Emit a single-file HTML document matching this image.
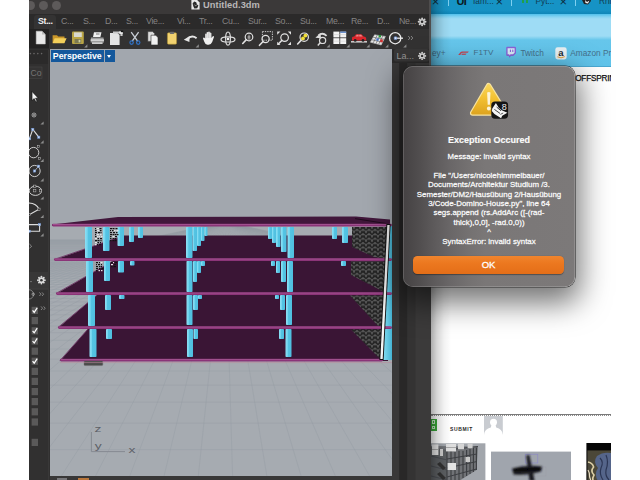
<!DOCTYPE html>
<html><head><meta charset="utf-8">
<style>
html,body{margin:0;padding:0;}
body{width:640px;height:480px;overflow:hidden;background:#fff;position:relative;font-family:"Liberation Sans",sans-serif;}
.a{position:absolute;}
#rh{left:29px;top:0;width:402px;height:480px;background:#2d2c2c;overflow:hidden;}
#title{left:0;top:0;width:402px;height:14px;background:#3b3939;}
.tl{position:absolute;top:1px;width:9px;height:9px;border-radius:50%;background:#5d5a5a;}
#tabs{left:0;top:14px;width:402px;height:15px;background:#2b2a2a;}
.tab{position:absolute;top:1.5px;font-size:8.8px;color:#858383;letter-spacing:-0.3px;line-height:11px;}
#tools{left:0;top:29px;width:402px;height:20px;background:#333232;}
#vp{left:21px;top:49px;width:342px;height:427px;background:#a2a7ae;overflow:hidden;}
#side{left:0;top:49px;width:21px;height:431px;background:#313030;}
#rp{left:363px;top:49px;width:39px;height:431px;background:#2c2b2b;}
#br{left:431px;top:0;width:180px;height:480px;background:#fff;overflow:hidden;}
#dlg{left:403px;top:66px;width:172px;height:220.6px;border-radius:10px;background:linear-gradient(90deg,#454243 0%,#504d4e 9%,#5d5a5b 18%,#6a6768 28%,#747171 38%,#7a7777 48%,#7c7979 100%);box-shadow:inset 0 0 0 0.7px rgba(255,255,255,.22),0 0 0 0.6px rgba(30,30,30,.85),0 11px 30px 5px rgba(0,0,0,.55);color:#fff;text-align:center;}
.dt{left:0;width:172px;text-align:center;font-size:7.9px;color:#fbfbfb;white-space:nowrap;-webkit-text-stroke:0.28px rgba(255,255,255,.85);}
#ok{left:9.7px;top:190.2px;width:151.8px;height:18.2px;-webkit-text-stroke:0.3px #fff;border-radius:4.5px;background:linear-gradient(180deg,#f0852e 0%,#ec781f 40%,#e46e18 100%);color:#fff;font-size:9.5px;line-height:18px;text-align:center;box-shadow:0 0.5px 1px rgba(0,0,0,.35);}
.tb{font-size:13px;color:#0c2c3c;line-height:13px;}
.sep{top:0;width:1px;height:6px;background:#7fd0f0;}
.tt{top:-3.2px;font-size:8.3px;color:#123c52;line-height:9px;white-space:nowrap;}
.bm{top:48px;font-size:8.3px;color:#45708a;line-height:10px;white-space:nowrap;}
</style></head><body>

<div id="br" class="a">
 <div class="a" style="left:0;top:0;width:180px;height:14px;background:#1693c5;"></div>
 <div class="a" style="left:0;top:10px;width:180px;height:3.5px;background:linear-gradient(180deg,#1693c5,#0f86b8);"></div>
 <div class="a" style="left:0;top:13.5px;width:180px;height:26px;background:#9edcf5;"></div>
 <div class="a" style="left:0;top:13.5px;width:180px;height:5px;background:linear-gradient(180deg,#4fc0ec,#86d4f2 60%,#9edcf5);"></div>
 <div class="a" style="left:0;top:36px;width:180px;height:31px;background:linear-gradient(180deg,#9edcf5 0,#66c6eb 4px,#5fc3ea 100%);"></div>
 <div class="a" style="left:0;top:66px;width:180px;height:1px;background:#4aa8d2;"></div>
 <!-- tab strip, clipped text -->
 <div class="a tb" style="left:0.8px;top:-5.5px;">×</div>
 <div class="a sep" style="left:17px;"></div>
 <div class="a" style="left:25.5px;top:-4.5px;font-size:11px;font-weight:bold;color:#0a1a22;letter-spacing:-0.6px;line-height:10px;">UI</div>
 <div class="a tt" style="left:42px;">Iam...</div>
 <div class="a tb" style="left:64.5px;top:-5.5px;">×</div>
 <div class="a sep" style="left:80px;"></div>
 <div class="a" style="left:91px;top:-1px;width:2.4px;height:3.6px;background:#1fa04a;"></div><div class="a" style="left:94.6px;top:-1px;width:2.4px;height:3.6px;background:#1fa04a;"></div>
 <div class="a tt" style="left:104.5px;">Pyt...</div>
 <div class="a tb" style="left:128.5px;top:-5.5px;">×</div>
 <div class="a sep" style="left:143.5px;"></div>
 <svg class="a" style="left:150px;top:-4px" width="12" height="10" viewBox="0 0 12 10"><path d="M1 4 L4 0 L9 1 L10 5 L7 8.5 L3 8 Z" fill="#222"/><path d="M4 4 L6 6 L8.5 4.5 L7 7.5 L4.5 7 Z" fill="#eee"/></svg>
 <div class="a tt" style="left:168px;">Rhin</div>
 <!-- bookmarks -->
 <div class="a bm" style="left:1px;">ey+</div>
 <svg class="a" style="left:27.4px;top:51px" width="11" height="4.4" viewBox="0 0 11 4.4"><path d="M0.2 3.9L2.2 1.5Q3 0.5 4.4 0.5L10.8 0.5L9.8 1.7L4.8 1.7Q4 1.7 3.5 2.3L2.2 3.9Z" fill="#c44452"/><path d="M3.2 3.9L4.3 2.6L8.6 2.6L7.6 3.9Z" fill="#c44452" opacity=".85"/></svg>
 <div class="a bm" style="left:42.6px;font-size:8.1px">F1TV</div>
 <svg class="a" style="left:73.6px;top:46.4px" width="12" height="13" viewBox="0 0 12 13"><path d="M2.4 0.8 H9.8 Q11 0.8 11 2 V7.2 L8.2 10 H6 L4 11.8 V10 H2.4 Q1.2 10 1.2 8.8 V2 Q1.2 0.8 2.4 0.8 Z" fill="#8a63d8"/><path d="M2.6 2.2 H9.6 V6.8 L8 8.2 H5.6 L4.3 9.4 V8.2 H2.6 Z" fill="#d9ecf8"/><path d="M5.4 3.6V6 M7.8 3.6V6" stroke="#8458d6" stroke-width="1"/></svg>
 <div class="a bm" style="left:89.4px;">Twitch</div>
 <svg class="a" style="left:124px;top:46.8px" width="12" height="13" viewBox="0 0 12 13"><rect x="0.3" y="0.3" width="11.4" height="12.2" rx="2.4" fill="#e9f1f4"/><text x="6" y="8.6" text-anchor="middle" font-family="Liberation Sans, sans-serif" font-weight="bold" font-size="9.5" fill="#1b2a33">a</text><path d="M2.4 9.8 Q6 12 9.8 9.6" stroke="#e7a33a" stroke-width="1" fill="none"/></svg>
 <div class="a bm" style="left:139.2px;">Amazon Pr</div>
 <!-- page -->
 <div class="a" style="left:144.2px;top:73.5px;font-size:8.2px;color:#0c0c0c;white-space:nowrap;letter-spacing:-0.2px;-webkit-text-stroke:0.25px #111;">OFFSPRING</div>
 <div class="a" style="left:0;top:413.8px;width:180px;height:1.1px;background:#7a7a7a;"></div>
 <div class="a" style="left:0;top:414.8px;width:180px;height:0;border-top:1.2px dotted #8f8f8f;"></div>
 <div class="a" style="left:0;top:418.8px;width:5.8px;height:12px;background:#3aaa3a;"></div><div class="a" style="left:1px;top:420.4px;width:3.2px;height:3.4px;border:0.8px solid #c9ecc9;box-sizing:border-box;"></div><div class="a" style="left:1px;top:425.6px;width:3.2px;height:3.4px;border:0.8px solid #c9ecc9;box-sizing:border-box;"></div>
 <div class="a" style="left:19px;top:425.5px;font-size:5px;font-weight:bold;letter-spacing:0.62px;color:#2a2a2a;">SUBMIT</div>
 <svg class="a" style="left:53px;top:416px" width="19" height="19" viewBox="0 0 19 19"><path d="M0 0H18.8V18.6L9.4 11L0 18.6Z" fill="#c9ccd1"/><circle cx="9.5" cy="6.2" r="3.5" fill="#fff"/><path d="M0 18.6Q0.6 12.6 6.8 11.4L7.6 8.4H11.4L12.2 11.4Q18.2 12.6 18.8 18.6Z" fill="#fff"/></svg>
 <svg class="a" style="left:0;top:438px" width="180" height="42" viewBox="431 438 180 42">
<defs><filter id="bl" x="-10%" y="-10%" width="120%" height="120%"><feGaussianBlur stdDeviation="0.45"/></filter><filter id="bl2" x="-20%" y="-20%" width="140%" height="140%"><feGaussianBlur stdDeviation="0.8"/></filter></defs>
<g filter="url(#bl)">
<rect x="431" y="443.3" width="54.4" height="37" fill="#a2a6ac"/>
<path d="M431 446L478 446.5L476.5 470L459 481L431 481Z" fill="#707276"/>
<path d="M431 447L447 450L447 481L431 481Z" fill="#5c5e62"/>
<path d="M447 450L478 446.5" stroke="#3e4044" stroke-width="1"/>
<path d="M447 450V481M451 451V481M455 452V481M459 451V480M463 451V478M466.6 450V476M470 449V474M473.4 448V472M476.4 447.5V470" stroke="#3c3e42" stroke-width="1.1"/>
<path d="M447 459L477 454M447 468L477 461.5M447 477L476.5 469" stroke="#3c3e42" stroke-width="1"/>
<path d="M431 456L447 460M431 466L447 470M431 476L447 480" stroke="#4a4c50" stroke-width="1"/>
<path d="M440 462L446 468L443 470L437 464ZM440 472L446 478L443 480L437 474Z" fill="#333"/>
<rect x="432" y="444.4" width="6.4" height="10.6" fill="#e6e6e6"/><rect x="446" y="444" width="10" height="7.4" fill="#dedede"/><rect x="458" y="443.6" width="6" height="5.6" fill="#d6d6d6"/><rect x="467.6" y="443.6" width="5" height="4.6" fill="#cfcfcf"/>
<rect x="447.6" y="463" width="8.4" height="7" fill="#e2e2e2"/><rect x="465.6" y="457" width="4.4" height="5" fill="#c9c9c9"/><rect x="440" y="449" width="3" height="7" fill="#cdcdcd"/>
<path d="M432 449.5H438.4M446 447.5H456" stroke="#9a9a9a" stroke-width="0.8"/>
</g>
<rect x="491" y="451.6" width="80" height="29" fill="#a0a5ad"/>
<rect x="525.2" y="454.2" width="12.6" height="8.8" fill="none" stroke="#8a86c8" stroke-width="0.6"/>
<rect x="531" y="467" width="15" height="9" fill="none" stroke="#9a9aa6" stroke-width="0.4"/>
<g filter="url(#bl2)"><path d="M526.2 455.4L529.4 455L534.6 481L529.6 481Z" fill="#16161c"/><path d="M512 468.4Q527 464 542 466.6L541 471.6Q528 476 513.6 474.4Z" fill="#1a1a20"/><path d="M514 470L541 469" stroke="#000" stroke-width="2.4"/></g>
<rect x="586.4" y="443" width="25" height="37" fill="#050505"/>
<rect x="587.4" y="450.4" width="24" height="30" fill="#4b4738"/>
<g filter="url(#bl)"><path d="M597 456Q603 451.6 611 453V481H598Q593.6 474 598 468Q592.6 462 597 456Z" fill="#55658a"/><path d="M600 458Q604 462 601 468Q599 474 603 480M606 455Q609 462 606 470Q605 476 609 480" stroke="#2c3654" stroke-width="1.2" fill="none"/>
<path d="M588 462Q592.6 463 593.6 467Q590 471 594 475Q592 478 593 481" stroke="#dccfa6" stroke-width="1.6" fill="none"/><path d="M588 470Q590 473 589.6 477L591 481" stroke="#e8dcc0" stroke-width="1.2" fill="none"/></g>
</svg>
</div>
<div class="a" style="left:431px;top:0;width:20px;height:480px;background:linear-gradient(90deg,rgba(0,0,0,.32),rgba(0,0,0,.16) 30%,rgba(0,0,0,.05) 65%,rgba(0,0,0,0));"></div>
<div id="rh" class="a">
 <div id="title" class="a">
<div class="tl" style="left:-3.5px"></div><div class="tl" style="left:9.5px"></div><div class="tl" style="left:22.5px"></div>
<svg class="a" style="left:162px;top:0" width="9" height="10" viewBox="0 0 9 10"><path d="M0.4 0H6.2L8.6 2.4V9.6H0.4Z" fill="#e8e8e8"/><path d="M1.6 3.4L3.2 1.6L5.2 2.2L6 4.6L7.4 5.6L6.2 8.2L3.4 8.4L2.4 6.4Z" fill="#2a2a2a"/><path d="M3.4 4.6L4.6 5.8L5.8 5" stroke="#e8e8e8" stroke-width="0.6" fill="none"/></svg>
<div class="a" style="left:174px;top:-1.5px;font-size:9.3px;font-weight:bold;color:#b9b7b7;line-height:12px;white-space:nowrap;letter-spacing:0.05px;">Untitled.3dm</div>
</div>
 <div id="tabs" class="a"><div class="a" style="left:5px;top:1px;width:22px;height:14px;background:#343333;border-radius:3px 3px 0 0;"></div>
<span class="tab" style="left:9px;color:#f2f2f2;font-weight:bold;">St...</span>
<span class="tab" style="left:32px;">C...</span>
<span class="tab" style="left:54px;">S...</span>
<span class="tab" style="left:76px;">D...</span>
<span class="tab" style="left:97px;">S...</span>
<span class="tab" style="left:117px;">Vie...</span>
<span class="tab" style="left:148px;">Vi...</span>
<span class="tab" style="left:170px;">Tr...</span>
<span class="tab" style="left:193px;">Cu...</span>
<span class="tab" style="left:219px;">Sur...</span>
<span class="tab" style="left:246px;">So...</span>
<span class="tab" style="left:271px;">Su...</span>
<span class="tab" style="left:297px;">Me...</span>
<span class="tab" style="left:322px;">Re...</span>
<span class="tab" style="left:348px;">D...</span>
<span class="tab" style="left:370px;">Ne...</span><svg class="a" style="left:0;top:0" width="402" height="15"><circle cx="396.52" cy="7.80" r="0.97" fill="#cfcfcf"/><circle cx="395.52" cy="10.22" r="0.97" fill="#cfcfcf"/><circle cx="393.10" cy="11.22" r="0.97" fill="#cfcfcf"/><circle cx="390.68" cy="10.22" r="0.97" fill="#cfcfcf"/><circle cx="389.68" cy="7.80" r="0.97" fill="#cfcfcf"/><circle cx="390.68" cy="5.38" r="0.97" fill="#cfcfcf"/><circle cx="393.10" cy="4.38" r="0.97" fill="#cfcfcf"/><circle cx="395.52" cy="5.38" r="0.97" fill="#cfcfcf"/><circle cx="393.1" cy="7.8" r="2.88" fill="#cfcfcf"/><circle cx="393.1" cy="7.8" r="1.30" fill="#2b2a2a"/></svg></div>
 <div id="tools" class="a"><svg class="a" style="left:0;top:0" width="402" height="20" viewBox="29 29 402 20">
<rect x="29" y="29" width="20" height="19.5" fill="#232222"/>
<path d="M36.2 31.2H42L45.3 34.4V44H36.2Z" fill="#e9e9e9" stroke="#c9c9c9" stroke-width="0.5"/><path d="M42 31.2V34.4H45.3Z" fill="#bdbdbd"/>
<path d="M52.6 35.2H57L58.2 36.6H64.5V43H52.6Z" fill="#c9962a"/><path d="M54.6 38.2H66.6L64.3 43.2H52.6Z" fill="#f3cf5a"/>
<rect x="72" y="31.6" width="11.8" height="12.4" rx="1" fill="#b9a546"/><rect x="74" y="32.4" width="7.8" height="4.6" fill="#d8d8d0"/><rect x="74.6" y="39" width="6.6" height="4.2" fill="#7d7a52"/><rect x="78.6" y="39.8" width="1.8" height="2.6" fill="#d0cfa0"/>
<path d="M84.2 47.4L87.4 47.4L87.4 44.199999999999996Z" fill="#8d8d8d"/>
<path d="M94 32.2H101.5L100.4 37H93Z" fill="#efefef"/><path d="M91 37.4H103.5L104 42.4H90.6Z" fill="#9c9c9c"/><rect x="90.6" y="39.4" width="13.4" height="1.4" fill="#e0e0e0"/><rect x="92" y="42.2" width="10.6" height="1.8" fill="#cfcfcf"/><path d="M96 34H99.5" stroke="#555" stroke-width="0.8"/>
<path d="M110 33H117.5L119.6 35V45H110Z" fill="#e4e4e4"/><path d="M113 31.4H119L122.6 32.6V36H120.4V33.6H113Z" fill="#c8c8c8"/><rect x="119.4" y="31.2" width="3.4" height="2.6" fill="#f5f5f5"/><rect x="120.8" y="30.6" width="2.4" height="1.6" fill="#111"/>
<path d="M131.2 32.2L137.6 41.2M138.6 32.2L132.2 41.2" stroke="#c9ced6" stroke-width="1.3" fill="none"/><circle cx="131.6" cy="42.6" r="1.7" fill="none" stroke="#2f6fc2" stroke-width="1.2"/><circle cx="138.2" cy="42.6" r="1.7" fill="none" stroke="#2f6fc2" stroke-width="1.2"/>
<path d="M147.8 31.6H152.6L154.6 33.6V41.4H147.8Z" fill="#dcdcdc" stroke="#2d2c2c" stroke-width="0.5"/><path d="M151 35.2H155.8L158 37.4V45H151Z" fill="#f1f1f1" stroke="#2d2c2c" stroke-width="0.6"/>
<rect x="167.4" y="32.8" width="9.2" height="11.4" rx="1.2" fill="#f1d270" stroke="#a98a2a" stroke-width="0.5"/><rect x="169.8" y="31.8" width="4.4" height="2.2" rx="0.8" fill="#6d6d6d"/>
<path d="M187.4 39.4Q191.4 34.4 196.6 38.2" stroke="#e6e6e6" stroke-width="2" fill="none"/><path d="M183.8 39.8L189.6 36L189.4 42Z" fill="#e6e6e6"/>
<path d="M195.6 47.4L198.79999999999998 47.4L198.79999999999998 44.199999999999996Z" fill="#8d8d8d"/>
<path d="M205.2 38.4V34.2Q205.9 33 206.6 34.2V32.6Q207.4 31.2 208.2 32.6V32Q209 30.8 209.8 32V33Q210.6 32 211.4 33.2V38L212.6 36.4Q213.8 35.6 214 37L212.2 42Q211 44.8 208.6 44.8H207.4Q205.2 44.4 204.4 42L203 38.6Q203.4 37.2 204.4 37.8Z" fill="#f0f0f0"/><path d="M206.8 34V38M208.4 32.6V38M210 33V38" stroke="#9a9a9a" stroke-width="0.4"/>
<ellipse cx="228" cy="39.4" rx="7" ry="2.6" fill="none" stroke="#dcdcdc" stroke-width="1.2"/><ellipse cx="228" cy="38.6" rx="2.4" ry="6.6" fill="none" stroke="#dcdcdc" stroke-width="1.2"/><circle cx="228" cy="39" r="1.3" fill="#f2f2f2"/>
<circle cx="249" cy="37" r="3.8" fill="none" stroke="#e2e2e2" stroke-width="1.2"/><path d="M246.34 39.66L242.74 43.459999999999994" stroke="#e2e2e2" stroke-width="1.6" stroke-linecap="round"/><path d="M249 34.6V38.6M247.4 37H250.6M247.6 39H250.4" stroke="#e2e2e2" stroke-width="0.7"/>
<rect x="262.4" y="31.6" width="10" height="8.6" fill="none" stroke="#d6d6d6" stroke-width="0.9" stroke-dasharray="1.4 1"/>
<circle cx="265.6" cy="39" r="3.6" fill="none" stroke="#e2e2e2" stroke-width="1.2"/><path d="M263.08000000000004 41.52L259.48 45.32" stroke="#e2e2e2" stroke-width="1.6" stroke-linecap="round"/>
<circle cx="284.6" cy="37.6" r="3.8" fill="none" stroke="#e2e2e2" stroke-width="1.2"/><path d="M281.94 40.26L278.34 44.059999999999995" stroke="#e2e2e2" stroke-width="1.6" stroke-linecap="round"/>
<path d="M277.2 31.6H280.4L277.2 34.8ZM291 31.6H287.8L291 34.8ZM291 45H287.8L291 41.8ZM277.2 45H280.4L277.2 41.8Z" fill="#e2e2e2"/>
<circle cx="304.2" cy="37.2" r="4.2" fill="none" stroke="#e2e2e2" stroke-width="1.2"/><path d="M301.26 40.14L297.65999999999997 43.94" stroke="#e2e2e2" stroke-width="1.6" stroke-linecap="round"/>
<circle cx="305.4" cy="35.6" r="1.9" fill="#f1df3a"/><circle cx="303" cy="38.4" r="1.9" fill="#f1df3a"/>
<path d="M318.4 35.4Q322.6 32 326.6 35.8" stroke="#dcdcdc" stroke-width="1.8" fill="none"/><path d="M315.4 37.8L320.6 33L321 38.2Z" fill="#dcdcdc"/><circle cx="322.6" cy="40.4" r="3.1" fill="none" stroke="#dcdcdc" stroke-width="1.2"/><path d="M320.4 42.6L317.8 45.4" stroke="#dcdcdc" stroke-width="1.5"/>
<path d="M326.6 47.4L329.8 47.4L329.8 44.199999999999996Z" fill="#8d8d8d"/>
<rect x="333.4" y="31.6" width="6" height="5.8" fill="#f3f3f3"/>
<rect x="340.2" y="31.6" width="6" height="5.8" fill="#f3f3f3"/>
<rect x="333.4" y="38.2" width="6" height="5.8" fill="#f3f3f3"/>
<rect x="340.2" y="38.2" width="6" height="5.8" fill="#f3f3f3"/>
<rect x="340.2" y="31.6" width="6" height="1.2" fill="#4a78c2"/>
<path d="M333.4 34.6H346.2M333.4 41.2H346.2" stroke="#c8c8c8" stroke-width="0.5"/>
<path d="M346.4 47.4L349.59999999999997 47.4L349.59999999999997 44.199999999999996Z" fill="#8d8d8d"/>
<rect x="351" y="41" width="16" height="1.6" fill="#c9c9c9"/><path d="M352 40.6V37.6Q352.4 36.6 354.2 36.6L356 34.2H361.4L363.6 36.6Q366.2 36.8 366.2 38.4V40.6Z" fill="#d9262c"/><circle cx="355.2" cy="40.4" r="1.4" fill="#222"/><circle cx="363" cy="40.4" r="1.4" fill="#222"/><path d="M356.8 34.8H358.6V36.6H355.6ZM359.2 34.8H361L362.6 36.6H359.2Z" fill="#e98a8a"/>
<path d="M366.4 47.4L369.59999999999997 47.4L369.59999999999997 44.199999999999996Z" fill="#8d8d8d"/>
<path d="M374.6 34.8L385.4 36.4L381.2 45L370.4 42.2Z" fill="#e6e6e6" stroke="#bdbdbd" stroke-width="0.6"/><path d="M377.2 35.2L373.2 42.9M380 35.6L376 43.6M382.8 36L378.6 44.3M373.2 37.3L384 39.2M371.8 39.8L382.6 42.1" stroke="#555" stroke-width="0.6"/><rect x="378.6" y="35" width="2.4" height="2.4" fill="#2a9a3c"/><rect x="380.2" y="39.4" width="2.6" height="2.8" fill="#d23030"/><rect x="376.4" y="38.4" width="2.2" height="2.2" fill="#3a6fd0"/>
<path d="M385.2 47.4L388.4 47.4L388.4 44.199999999999996Z" fill="#8d8d8d"/>
<circle cx="395.2" cy="38.2" r="5.6" fill="none" stroke="#ececec" stroke-width="1.3"/><path d="M396 38.2H403" stroke="#ececec" stroke-width="1.3"/><rect x="394.2" y="36.8" width="2.6" height="2.8" rx="0.6" fill="#dfe8f8" stroke="#5a86d8" stroke-width="0.6"/>
<path d="M403.2 47.4L406.4 47.4L406.4 44.199999999999996Z" fill="#8d8d8d"/>
<path d="M408.2 36L410 38L408.2 40M411 36L412.8 38L411 40" stroke="#9a9a9a" stroke-width="0.8" fill="none"/>
</svg></div>
 <div id="side" class="a"><svg class="a" style="left:0;top:0" width="21" height="431" viewBox="29 49 21 431">
<rect x="29" y="50" width="19.5" height="14" fill="#2b2a2a"/>
<path d="M48.6 50V480" stroke="#3d3c3c" stroke-width="0.8"/>
<circle cx="30.4" cy="53.6" r="0.8" fill="#6a6868"/>
<circle cx="34" cy="53.6" r="0.8" fill="#6a6868"/>
<circle cx="37.8" cy="53.6" r="0.8" fill="#6a6868"/>
<circle cx="41.6" cy="53.6" r="0.8" fill="#6a6868"/>
<rect x="28" y="67" width="14" height="11.6" fill="#343333" stroke="#474646" stroke-width="0.6"/>
<text x="30.6" y="76" font-family="Liberation Sans, sans-serif" font-size="8.6" fill="#757373">Co</text>
<path d="M32 91.4V100.6L34.2 98.6L35.8 102L37.2 101.4L35.6 98.2H38.4Z" fill="#f4f4f4" stroke="#111" stroke-width="0.7"/>
<circle cx="34" cy="115" r="2" fill="none" stroke="#cfcfcf" stroke-width="0.7"/><circle cx="34" cy="115" r="0.8" fill="#efefef"/>
<path d="M40.4 124.6L43.6 124.6L43.6 121.39999999999999Z" fill="#8d8d8d"/>
<path d="M29.4 138.8L32.8 129.4L38.8 137.2" stroke="#dcdcdc" stroke-width="1.1" fill="none"/>
<rect x="31.699999999999996" y="128.3" width="2.2" height="2.2" fill="#c4d6f4" stroke="#6f96d8" stroke-width="0.5"/><rect x="28.5" y="137.70000000000002" width="2.2" height="2.2" fill="#c4d6f4" stroke="#6f96d8" stroke-width="0.5"/><rect x="37.699999999999996" y="136.1" width="2.2" height="2.2" fill="#c4d6f4" stroke="#6f96d8" stroke-width="0.5"/>
<path d="M40.4 143.4L43.6 143.4L43.6 140.20000000000002Z" fill="#8d8d8d"/>
<circle cx="33.6" cy="152.6" r="5.2" fill="none" stroke="#dcdcdc" stroke-width="0.9"/>
<rect x="37.3" y="145.5" width="2.2" height="2.2" fill="#2f2e2e" stroke="#c4c4c4" stroke-width="0.5"/><rect x="38.5" y="157.3" width="2.2" height="2.2" fill="#2f2e2e" stroke="#c4c4c4" stroke-width="0.5"/>
<path d="M40.4 162L43.6 162L43.6 158.8Z" fill="#8d8d8d"/>
<circle cx="34.6" cy="171" r="5.6" fill="none" stroke="#dcdcdc" stroke-width="0.9"/><path d="M34.6 171L38.4 166.4" stroke="#dcdcdc" stroke-width="0.7"/>
<rect x="33.5" y="169.9" width="2.2" height="2.2" fill="#c4d6f4" stroke="#6f96d8" stroke-width="0.5"/><rect x="37.5" y="165.1" width="2.2" height="2.2" fill="#c4d6f4" stroke="#6f96d8" stroke-width="0.5"/>
<path d="M40.4 181.4L43.6 181.4L43.6 178.20000000000002Z" fill="#8d8d8d"/>
<ellipse cx="35.4" cy="190.8" rx="6.2" ry="4.6" fill="none" stroke="#dcdcdc" stroke-width="0.9"/>
<rect x="33.699999999999996" y="185.1" width="2.2" height="2.2" fill="#2f2e2e" stroke="#c4c4c4" stroke-width="0.5"/><rect x="33.699999999999996" y="189.70000000000002" width="2.2" height="2.2" fill="#2f2e2e" stroke="#c4c4c4" stroke-width="0.5"/><rect x="39.3" y="189.70000000000002" width="2.2" height="2.2" fill="#2f2e2e" stroke="#c4c4c4" stroke-width="0.5"/>
<path d="M40.4 199.6L43.6 199.6L43.6 196.4Z" fill="#8d8d8d"/>
<path d="M29 203Q36.6 203.4 39 209.2L29.6 214.4" stroke="#dcdcdc" stroke-width="1.1" fill="none"/>
<rect x="37.9" y="208.1" width="2.2" height="2.2" fill="#2f2e2e" stroke="#c4c4c4" stroke-width="0.5"/><rect x="28.5" y="213.3" width="2.2" height="2.2" fill="#2f2e2e" stroke="#c4c4c4" stroke-width="0.5"/>
<path d="M40.4 218L43.6 218L43.6 214.8Z" fill="#8d8d8d"/>
<path d="M29 224.6H39.6V231.2H29" stroke="#dcdcdc" stroke-width="1.1" fill="none"/>
<rect x="38.5" y="223.5" width="2.2" height="2.2" fill="#c4d6f4" stroke="#6f96d8" stroke-width="0.5"/><rect x="28.299999999999997" y="230.1" width="2.2" height="2.2" fill="#c4d6f4" stroke="#6f96d8" stroke-width="0.5"/>
<path d="M40.4 236.4L43.6 236.4L43.6 233.20000000000002Z" fill="#8d8d8d"/>
<path d="M29.4 244L31.6 246.2L29.4 248.4" stroke="#a5a5a5" stroke-width="0.8" fill="none"/>
<rect x="29" y="272" width="19.4" height="16.6" fill="#383737"/><path d="M29 289H48.4" stroke="#4a4949" stroke-width="0.7"/>
<path d="M30 281.6H32" stroke="#8a8a8a" stroke-width="0.7"/>
<circle cx="44.82" cy="280.20" r="0.97" fill="#dadada"/><circle cx="43.82" cy="282.62" r="0.97" fill="#dadada"/><circle cx="41.40" cy="283.62" r="0.97" fill="#dadada"/><circle cx="38.98" cy="282.62" r="0.97" fill="#dadada"/><circle cx="37.98" cy="280.20" r="0.97" fill="#dadada"/><circle cx="38.98" cy="277.78" r="0.97" fill="#dadada"/><circle cx="41.40" cy="276.78" r="0.97" fill="#dadada"/><circle cx="43.82" cy="277.78" r="0.97" fill="#dadada"/><circle cx="41.4" cy="280.2" r="2.88" fill="#dadada"/><circle cx="41.4" cy="280.2" r="1.30" fill="#383737"/>
<path d="M29 289.8A4.6 4.6 0 0 1 29 299" stroke="#9a9a9a" stroke-width="0.7" fill="none"/><circle cx="33.2" cy="294.2" r="1.2" fill="none" stroke="#cfcfcf" stroke-width="0.6"/>
<path d="M39.4 292.4L41 294.2L39.4 296M42 292.4L43.6 294.2L42 296" stroke="#a5a5a5" stroke-width="0.7" fill="none"/>
<path d="M41 306.4L42.6 308.2L41 310M43.6 306.4L45.2 308.2L43.6 310" stroke="#a5a5a5" stroke-width="0.7" fill="none"/>
<rect x="31.6" y="306.79999999999995" width="6.4" height="7.2" fill="#5a5959"/>
<path d="M32.6 310.4L34.2 312.4L37.2 307.79999999999995" stroke="#fff" stroke-width="1.2" fill="none"/>
<rect x="31.6" y="317.0" width="6.4" height="7.2" fill="#5a5959"/>
<rect x="31.6" y="327.2" width="6.4" height="7.2" fill="#5a5959"/>
<path d="M32.6 330.8L34.2 332.8L37.2 328.2" stroke="#fff" stroke-width="1.2" fill="none"/>
<rect x="31.6" y="337.4" width="6.4" height="7.2" fill="#5a5959"/>
<path d="M32.6 341L34.2 343L37.2 338.4" stroke="#fff" stroke-width="1.2" fill="none"/>
<rect x="31.6" y="347.59999999999997" width="6.4" height="7.2" fill="#5a5959"/>
<rect x="31.6" y="357.59999999999997" width="6.4" height="7.2" fill="#5a5959"/>
<path d="M32.6 361.2L34.2 363.2L37.2 358.59999999999997" stroke="#fff" stroke-width="1.2" fill="none"/>
<rect x="31.6" y="367.79999999999995" width="6.4" height="7.2" fill="#5a5959"/>
<rect x="31.6" y="377.79999999999995" width="6.4" height="7.2" fill="#5a5959"/>
<rect x="31.6" y="388.0" width="6.4" height="7.2" fill="#5a5959"/>
<rect x="31.6" y="398.0" width="6.4" height="7.2" fill="#5a5959"/>
<rect x="31.6" y="408.2" width="6.4" height="7.2" fill="#5a5959"/>
<rect x="31.6" y="418.4" width="6.4" height="7.2" fill="#5a5959"/>
<rect x="31.6" y="438.79999999999995" width="6.4" height="7.2" fill="#5a5959"/>
</svg></div>
 <div id="vp" class="a"><svg class="a" style="left:0;top:0" width="342" height="427" viewBox="50 49 342 427">
<defs>
<pattern id="sc" width="6" height="4.4" patternUnits="userSpaceOnUse">
<rect width="6" height="4.4" fill="#252525"/>
<path d="M0 4.4 A3 3.4 0 0 1 6 4.4" fill="none" stroke="#6f6f6f" stroke-width="0.7"/>
<path d="M-3 2.2 A3 3.4 0 0 1 3 2.2 M3 2.2 A3 3.4 0 0 1 9 2.2" fill="none" stroke="#606060" stroke-width="0.6"/>
</pattern>
<linearGradient id="col" x1="0" x2="1" y1="0" y2="0"><stop offset="0" stop-color="#8ee0f4"/><stop offset="0.35" stop-color="#6fd3ee"/><stop offset="0.4" stop-color="#55c4e3"/><stop offset="1" stop-color="#4fbfe0"/></linearGradient>
</defs>
<rect x="50" y="49" width="342" height="427" fill="#a2a7ae" />
<rect x="50" y="226" width="342" height="250" fill="#a6abb1" />
<path d="M50 449.6H392 M50 423.1H392 M50 402.1H392 M50 385.1H392 M50 371.0H392 M50 359.1H392 M50 349.0H392 M50 340.3H392 M50 332.7H392 M50 326.0H392 M50 320.1H392 M50 314.8H392 M50 310.1H392 M50 305.8H392 M50 301.9H392 M50 298.4H392 M50 295.1H392 M50 292.2H392 M50 289.4H392 M50 286.9H392 M50 284.5H392 M50 282.3H392 M50 280.3H392 M50 278.4H392 M50 276.6H392 M50 274.9H392 M50 273.4H392 M50 271.9H392 M50 270.5H392 M50 269.1H392 M50 267.9H392 M50 266.7H392 M50 265.6H392 M50 264.5H392 M50 263.5H392 M50 262.5H392 M50 260.7H392 M50 259.0H392 M50 257.5H392 M50 256.1H392 M50 254.8H392 M50 253.6H392 M50 252.5H392 M50 251.4H392 M50 250.5H392 M50 249.6H392 M50 248.7H392 M50 247.9H392 M50 247.1H392 M50 246.4H392 M50 245.8H392 M50 245.1H392 M50 244.5H392 M50 243.9H392 M50 243.4H392 M50 242.9H392 M50 242.4H392 M50 241.9H392 M50 241.5H392 M50 241.0H392 M50 240.6H392 M50 240.2H392 M50 239.9H392 M225 222L-985.3 480 M225 222L-950.5 480 M225 222L-915.7 480 M225 222L-880.9 480 M225 222L-846.1 480 M225 222L-811.3 480 M225 222L-776.5 480 M225 222L-741.7 480 M225 222L-706.9 480 M225 222L-672.1 480 M225 222L-637.3 480 M225 222L-602.5 480 M225 222L-567.7 480 M225 222L-532.9 480 M225 222L-498.1 480 M225 222L-463.3 480 M225 222L-428.5 480 M225 222L-393.7 480 M225 222L-358.9 480 M225 222L-324.1 480 M225 222L-289.3 480 M225 222L-254.5 480 M225 222L-219.7 480 M225 222L-184.9 480 M225 222L-150.1 480 M225 222L-115.3 480 M225 222L-80.5 480 M225 222L-45.7 480 M225 222L-10.9 480 M225 222L23.9 480 M225 222L58.7 480 M225 222L93.5 480 M225 222L128.3 480 M225 222L163.1 480 M225 222L197.9 480 M225 222L232.7 480 M225 222L267.5 480 M225 222L302.3 480 M225 222L337.1 480 M225 222L371.9 480 M225 222L406.7 480 M225 222L441.5 480 M225 222L476.3 480 M225 222L511.1 480 M225 222L545.9 480 M225 222L580.7 480 M225 222L615.5 480 M225 222L650.3 480 M225 222L685.1 480 M225 222L719.9 480 M225 222L754.7 480 M225 222L789.5 480 M225 222L824.3 480 M225 222L859.1 480 M225 222L893.9 480 M225 222L928.7 480 M225 222L963.5 480 M225 222L998.3 480 M225 222L1033.1 480 M225 222L1067.9 480 M225 222L1102.7 480 M225 222L1137.5 480 M225 222L1172.3 480 M225 222L1207.1 480 M225 222L1241.9 480 M225 222L1276.7 480 M225 222L1311.5 480 M225 222L1346.3 480 M225 222L1381.1 480 M225 222L1415.9 480" stroke="#939aa2" stroke-width="0.6" fill="none" opacity="0.65"/>
<rect x="50" y="49" width="342" height="175" fill="#a2a7ae" />
<polygon points="52,224.5 118,217 356,216.5 390,219.5 390,226 52,226" fill="#41173b"/>
<path d="M355 218.6L389 224" stroke="#1c0a1a" stroke-width="0.9"/>
<polygon points="54,260 124,235.6 388,235.6 388,260" fill="#3a1535"/>
<path d="M54 259.5L124 235.6" stroke="#6a2a5e" stroke-width="0.8" fill="none"/>
<polygon points="56,294 113,261 388,261 388,294" fill="#3a1535"/>
<path d="M56 293.5L113 261" stroke="#6a2a5e" stroke-width="0.8" fill="none"/>
<polygon points="58,328 97,295 388,295 388,328" fill="#3a1535"/>
<path d="M58 327.5L97 295" stroke="#6a2a5e" stroke-width="0.8" fill="none"/>
<polygon points="60,361 88,329 388,329 388,361" fill="#3a1535"/>
<path d="M60 360.5L88 329" stroke="#6a2a5e" stroke-width="0.8" fill="none"/>
<polygon points="352,227 387,227 385,258.5 374,257 352,247" fill="url(#sc)"/>
<polygon points="351,261.5 385.5,261.5 384,292 351,275" fill="url(#sc)"/>
<polygon points="350,295.5 384,295.5 382,326 378,326" fill="url(#sc)"/>
<polygon points="351,329.5 382,329.5 381,358 378,357" fill="url(#sc)"/>
<rect x="85" y="227" width="7" height="31" rx="0.8" fill="url(#col)"/>
<rect x="103" y="227" width="6.5" height="24" rx="0.8" fill="url(#col)"/>
<rect x="117.5" y="227" width="6.5" height="19" rx="0.8" fill="url(#col)"/>
<rect x="129" y="227" width="5" height="15" rx="0.8" fill="url(#col)"/>
<rect x="138" y="227" width="5" height="11" rx="0.8" fill="url(#col)"/>
<rect x="186" y="227" width="6.5" height="31" rx="0.8" fill="url(#col)"/>
<rect x="192.5" y="227" width="4.5" height="24" rx="0.8" fill="url(#col)"/>
<rect x="197" y="227" width="4" height="19" rx="0.8" fill="url(#col)"/>
<rect x="201" y="227" width="3.5" height="14" rx="0.8" fill="url(#col)"/>
<rect x="204.5" y="227" width="3.0" height="9" rx="0.8" fill="url(#col)"/>
<rect x="287.5" y="227" width="6.5" height="31" rx="0.8" fill="url(#col)"/>
<rect x="281" y="227" width="5.5" height="25" rx="0.8" fill="url(#col)"/>
<rect x="276" y="227" width="4.5" height="20" rx="0.8" fill="url(#col)"/>
<rect x="272" y="227" width="4" height="16" rx="0.8" fill="url(#col)"/>
<rect x="268" y="227" width="4" height="12" rx="0.8" fill="url(#col)"/>
<rect x="332" y="227" width="5" height="12" rx="0.8" fill="url(#col)"/>
<rect x="342" y="227" width="6" height="16" rx="0.8" fill="url(#col)"/>
<rect x="86" y="261" width="7" height="31" rx="0.8" fill="url(#col)"/>
<rect x="104" y="261" width="6" height="20" rx="0.8" fill="url(#col)"/>
<rect x="118" y="261" width="6" height="11.5" rx="0.8" fill="url(#col)"/>
<rect x="130" y="261" width="4.5" height="4.5" rx="0.8" fill="url(#col)"/>
<rect x="186.5" y="261" width="6.0" height="31" rx="0.8" fill="url(#col)"/>
<rect x="193" y="261" width="4" height="21" rx="0.8" fill="url(#col)"/>
<rect x="197" y="261" width="4" height="12" rx="0.8" fill="url(#col)"/>
<rect x="201" y="261" width="4" height="5" rx="0.8" fill="url(#col)"/>
<rect x="287" y="261" width="6" height="31" rx="0.8" fill="url(#col)"/>
<rect x="281" y="261" width="5" height="21" rx="0.8" fill="url(#col)"/>
<rect x="276" y="261" width="4" height="12" rx="0.8" fill="url(#col)"/>
<rect x="271" y="261" width="4" height="5" rx="0.8" fill="url(#col)"/>
<rect x="341" y="261" width="5" height="5" rx="0.8" fill="url(#col)"/>
<rect x="88" y="295" width="7" height="31" rx="0.8" fill="url(#col)"/>
<rect x="105" y="295" width="6" height="15" rx="0.8" fill="url(#col)"/>
<rect x="119" y="295" width="5.5" height="4" rx="0.8" fill="url(#col)"/>
<rect x="186.5" y="295" width="6.0" height="30" rx="0.8" fill="url(#col)"/>
<rect x="193" y="295" width="5" height="15" rx="0.8" fill="url(#col)"/>
<rect x="198" y="295" width="4" height="4" rx="0.8" fill="url(#col)"/>
<rect x="286" y="295" width="6" height="30" rx="0.8" fill="url(#col)"/>
<rect x="280" y="295" width="5" height="15" rx="0.8" fill="url(#col)"/>
<rect x="275" y="295" width="4" height="4" rx="0.8" fill="url(#col)"/>
<rect x="89.5" y="329" width="7.0" height="28" rx="0.8" fill="url(#col)"/>
<rect x="106" y="329" width="6" height="10" rx="0.8" fill="url(#col)"/>
<rect x="187" y="329" width="6" height="28" rx="0.8" fill="url(#col)"/>
<rect x="193.5" y="329" width="4.5" height="10" rx="0.8" fill="url(#col)"/>
<rect x="285.5" y="329" width="6.0" height="28" rx="0.8" fill="url(#col)"/>
<rect x="279" y="329" width="5" height="10" rx="0.8" fill="url(#col)"/>
<rect x="95" y="228" width="1" height="1.2" fill="#111"/><rect x="97" y="228" width="2" height="1.2" fill="#e4e4e4"/><rect x="99.5" y="228" width="2" height="1.2" fill="#111"/><rect x="95" y="230" width="1.5" height="1.2" fill="#111"/><rect x="97.0" y="230" width="2" height="1.2" fill="#e4e4e4"/><rect x="100.0" y="230" width="1.5" height="1.2" fill="#111"/><rect x="95" y="232" width="2" height="1.2" fill="#111"/><rect x="98" y="232" width="2" height="1.2" fill="#111"/><rect x="100.5" y="232" width="1" height="1.2" fill="#111"/><rect x="95" y="234" width="1" height="1.2" fill="#151515"/><rect x="97" y="234" width="2" height="1.2" fill="#e4e4e4"/><rect x="100" y="234" width="1.5" height="1.2" fill="#e4e4e4"/><rect x="95" y="236" width="1.5" height="1.2" fill="#111"/><rect x="97.0" y="236" width="1" height="1.2" fill="#e4e4e4"/><rect x="98.5" y="236" width="1.5" height="1.2" fill="#e4e4e4"/><rect x="101.0" y="236" width="1.5" height="1.2" fill="#e4e4e4"/><rect x="95" y="238" width="2" height="1.2" fill="#e4e4e4"/><rect x="97.5" y="238" width="1.5" height="1.2" fill="#111"/><rect x="100.0" y="238" width="2" height="1.2" fill="#111"/><rect x="95" y="240" width="2" height="1.2" fill="#111"/><rect x="97.5" y="240" width="2" height="1.2" fill="#151515"/><rect x="100.5" y="240" width="1" height="1.2" fill="#111"/><rect x="95" y="242" width="2" height="1.2" fill="#e4e4e4"/><rect x="97.5" y="242" width="1.5" height="1.2" fill="#111"/><rect x="100.0" y="242" width="1" height="1.2" fill="#111"/><rect x="95" y="244" width="1.5" height="1.2" fill="#e4e4e4"/><rect x="97.0" y="244" width="1" height="1.2" fill="#111"/><rect x="99.0" y="244" width="2" height="1.2" fill="#151515"/><rect x="110" y="228" width="2" height="1.2" fill="#111"/><rect x="112.5" y="228" width="1.5" height="1.2" fill="#111"/><rect x="114.5" y="228" width="1" height="1.2" fill="#111"/><rect x="116.0" y="228" width="1.5" height="1.2" fill="#151515"/><rect x="110" y="230" width="1" height="1.2" fill="#111"/><rect x="112" y="230" width="1.5" height="1.2" fill="#151515"/><rect x="114.0" y="230" width="1.5" height="1.2" fill="#e4e4e4"/><rect x="116.5" y="230" width="2" height="1.2" fill="#e4e4e4"/><rect x="110" y="232" width="2" height="1.2" fill="#151515"/><rect x="113" y="232" width="2" height="1.2" fill="#111"/><rect x="116" y="232" width="1.5" height="1.2" fill="#151515"/><rect x="110" y="234" width="2" height="1.2" fill="#151515"/><rect x="112.5" y="234" width="1.5" height="1.2" fill="#151515"/><rect x="114.5" y="234" width="1.5" height="1.2" fill="#111"/><rect x="116.5" y="234" width="2" height="1.2" fill="#151515"/><rect x="110" y="236" width="1.5" height="1.2" fill="#151515"/><rect x="112.5" y="236" width="2" height="1.2" fill="#e4e4e4"/><rect x="115.0" y="236" width="2" height="1.2" fill="#111"/><rect x="110" y="238" width="1.5" height="1.2" fill="#151515"/><rect x="112.5" y="238" width="1.5" height="1.2" fill="#151515"/><rect x="114.5" y="238" width="1.5" height="1.2" fill="#111"/><rect x="110" y="240" width="1.5" height="1.2" fill="#151515"/><rect x="112.5" y="240" width="1.5" height="1.2" fill="#111"/><rect x="114.5" y="240" width="2" height="1.2" fill="#111"/><rect x="96" y="262" width="2" height="1.2" fill="#111"/><rect x="99" y="262" width="1" height="1.2" fill="#151515"/><rect x="100.5" y="262" width="2" height="1.2" fill="#e4e4e4"/><rect x="96" y="264" width="1" height="1.2" fill="#151515"/><rect x="98" y="264" width="2" height="1.2" fill="#111"/><rect x="101" y="264" width="1" height="1.2" fill="#111"/><rect x="96" y="266" width="2" height="1.2" fill="#111"/><rect x="99" y="266" width="1.5" height="1.2" fill="#111"/><rect x="101.0" y="266" width="1" height="1.2" fill="#111"/><rect x="96" y="268" width="2" height="1.2" fill="#111"/><rect x="99" y="268" width="1.5" height="1.2" fill="#111"/><rect x="101.5" y="268" width="2" height="1.2" fill="#111"/><rect x="96" y="270" width="1.5" height="1.2" fill="#151515"/><rect x="98.5" y="270" width="1.5" height="1.2" fill="#e4e4e4"/><rect x="101.0" y="270" width="1.5" height="1.2" fill="#e4e4e4"/><rect x="111" y="262" width="1.5" height="1.2" fill="#111"/><rect x="113.0" y="262" width="1" height="1.2" fill="#e4e4e4"/><rect x="115.0" y="262" width="2" height="1.2" fill="#111"/><rect x="111" y="264" width="2" height="1.2" fill="#e4e4e4"/><rect x="114" y="264" width="2" height="1.2" fill="#151515"/><rect x="111" y="266" width="1" height="1.2" fill="#151515"/><rect x="112.5" y="266" width="1" height="1.2" fill="#111"/><rect x="114.0" y="266" width="2" height="1.2" fill="#111"/>
<defs><linearGradient id="cy" x1="0" x2="1"><stop offset="0" stop-color="#86def2"/><stop offset="1" stop-color="#45b4d4"/></linearGradient></defs><polygon points="389,226 392,226 392,360 383,360" fill="url(#cy)"/>
<rect x="52" y="223.8" width="340" height="2.6" rx="1.3" fill="#8b3478"/>
<rect x="53" y="224.1" width="338" height="0.9" fill="#a95c97" opacity="0.8"/>
<rect x="54" y="258.3" width="338" height="2.6" rx="1.3" fill="#8b3478"/>
<rect x="55" y="258.6" width="336" height="0.9" fill="#a95c97" opacity="0.8"/>
<rect x="56" y="292.3" width="336" height="2.6" rx="1.3" fill="#8b3478"/>
<rect x="57" y="292.6" width="334" height="0.9" fill="#a95c97" opacity="0.8"/>
<rect x="58" y="326.3" width="334" height="2.6" rx="1.3" fill="#8b3478"/>
<rect x="59" y="326.6" width="332" height="0.9" fill="#a95c97" opacity="0.8"/>
<rect x="60" y="358.8" width="323" height="2.6" rx="1.3" fill="#8b3478"/>
<rect x="61" y="359.1" width="321" height="0.9" fill="#a95c97" opacity="0.8"/>
<rect x="84" y="361" width="18.8" height="4.6" fill="#4b4b4b" rx="1" stroke="#6a6a6a" stroke-width="0.4"/>
<path d="M60 362.6H392" stroke="#b88a9a" stroke-width="0.6"/>
<polygon points="390,226 392,226 392,360 388,360" fill="#3a1535" opacity="0.0"/>
<path d="M388.5 224L381.5 360" stroke="#111" stroke-width="4.2" stroke-linecap="butt"/>
<path d="M388.5 225L381.5 359" stroke="#f4f4f4" stroke-width="2.4"/>
<path d="M91.4 432V451.6H125" stroke="#82878e" stroke-width="0.9" fill="none"/>
<g font-family="Liberation Sans, sans-serif" font-size="9.6" fill="#5c6066"><text transform="translate(94.6 432.3) scale(1.45 1)">z</text><text transform="translate(94.8 448.6) scale(1.45 1)">y</text><text transform="translate(128.6 452.5) scale(1.45 1)">x</text></g>
</svg>
<div class="a" style="left:0.6px;top:1px;width:53.4px;height:12.4px;background:#14589c;color:#fff;font-size:8.8px;font-weight:bold;line-height:12.4px;text-align:center;letter-spacing:-0.05px;">Perspective</div>
<div class="a" style="left:55px;top:1px;width:9.6px;height:12.4px;background:#14589c;"></div>
<div class="a" style="left:57.2px;top:6px;width:0;height:0;border-left:2.6px solid transparent;border-right:2.6px solid transparent;border-top:3.2px solid #fff;"></div>
</div>
 <div id="rp" class="a"><svg class="a" style="left:0;top:0" width="39" height="431" viewBox="392 49 39 431">
<rect x="392" y="49" width="7.4" height="431" fill="#393838"/><rect x="399.4" y="62" width="7.8" height="418" fill="#292828"/><rect x="407.2" y="62" width="8" height="418" fill="#343333"/><rect x="415.2" y="62" width="15.8" height="418" fill="#3b3a3a"/><rect x="392" y="49" width="39" height="14" fill="#2b2a2a"/>
<rect x="394" y="49" width="35" height="12.6" rx="2" fill="#383737"/>
<text x="396.6" y="58.8" font-family="Liberation Sans, sans-serif" font-size="9" fill="#999797">La...</text>
<circle cx="425.33" cy="55.90" r="0.92" fill="#dcdcdc"/><circle cx="424.38" cy="58.18" r="0.92" fill="#dcdcdc"/><circle cx="422.10" cy="59.13" r="0.92" fill="#dcdcdc"/><circle cx="419.82" cy="58.18" r="0.92" fill="#dcdcdc"/><circle cx="418.87" cy="55.90" r="0.92" fill="#dcdcdc"/><circle cx="419.82" cy="53.62" r="0.92" fill="#dcdcdc"/><circle cx="422.10" cy="52.67" r="0.92" fill="#dcdcdc"/><circle cx="424.38" cy="53.62" r="0.92" fill="#dcdcdc"/><circle cx="422.1" cy="55.9" r="2.72" fill="#dcdcdc"/><circle cx="422.1" cy="55.9" r="1.22" fill="#383737"/>
</svg></div>
 <div class="a" style="left:400.2px;top:0;width:1.8px;height:66px;background:#4f4d4d;"></div>
 <div class="a" style="left:21px;top:476px;width:342px;height:4px;background:#383737;"></div><div class="a" style="left:27.5px;top:478px;width:10.5px;height:2px;background:#77777a;"></div><div class="a" style="left:49px;top:478px;width:11px;height:2px;background:#b9773c;"></div>
</div>

<div id="dlg" class="a">
<svg class="a" style="left:64px;top:14px" width="46" height="42" viewBox="0 0 46 42">
<defs><linearGradient id="wg" gradientUnits="userSpaceOnUse" x1="0" y1="3" x2="0" y2="36"><stop offset="0" stop-color="#f9d960"/><stop offset="0.45" stop-color="#f3c132"/><stop offset="1" stop-color="#dba01c"/></linearGradient></defs>
<path d="M21.6 5.6L38.3 33L5.6 33Z" fill="#f7e3a0" stroke="#f7e3a0" stroke-width="5.4" stroke-linejoin="round"/>
<path d="M21.6 5.6L38.3 33L5.6 33Z" fill="url(#wg)" stroke="url(#wg)" stroke-width="3" stroke-linejoin="round"/>
<path d="M20.1 12.4Q21.8 11.6 23.5 12.4L22.9 24.8H20.7Z" fill="#fdf4d6"/>
<circle cx="21.8" cy="28.5" r="1.9" fill="#fdf4d6"/>
<rect x="24.3" y="21.6" width="16.8" height="17.2" rx="3.7" fill="#151515"/>
<path d="M25.3 28.4L28.9 23L31.75 27.85L34.7 30.25L40.4 32.75L35.2 35.7L34.1 38.3L31 36.2L27.4 34.1L24.8 31Z" fill="#f4f4f4"/>
<path d="M27.4 29.4L33 33.4M29.6 27L34 30.8" stroke="#151515" stroke-width="0.8" fill="none"/>
<path d="M33.4 34.4L36.2 33" stroke="#151515" stroke-width="0.7" fill="none"/>
<text x="37.3" y="30.4" text-anchor="middle" font-family="Liberation Sans, sans-serif" font-size="9" fill="#f0f0f0">8</text>
</svg>
<div class="a dt" style="top:69px;font-size:9px;font-weight:bold;-webkit-text-stroke:0.15px #fff;">Exception Occured</div>
<div class="a dt" style="top:86.2px;font-size:7.8px">Message: invalid syntax</div>
<div class="a dt" style="top:104.6px;line-height:9.46px;">File "/Users/nicolehimmelbauer/<br>Documents/Architektur Studium /3.<br>Semester/DM2/Hausübung 2/Hausübung<br>3/Code-Domino-House.py", line 64<br>segs.append (rs.AddArc ([-(rad-<br>thick),0,0], -rad.0,0))<br>^<br>SyntaxError: invalid syntax</div>
<div class="a" id="ok">OK</div>
</div>
</body></html>
